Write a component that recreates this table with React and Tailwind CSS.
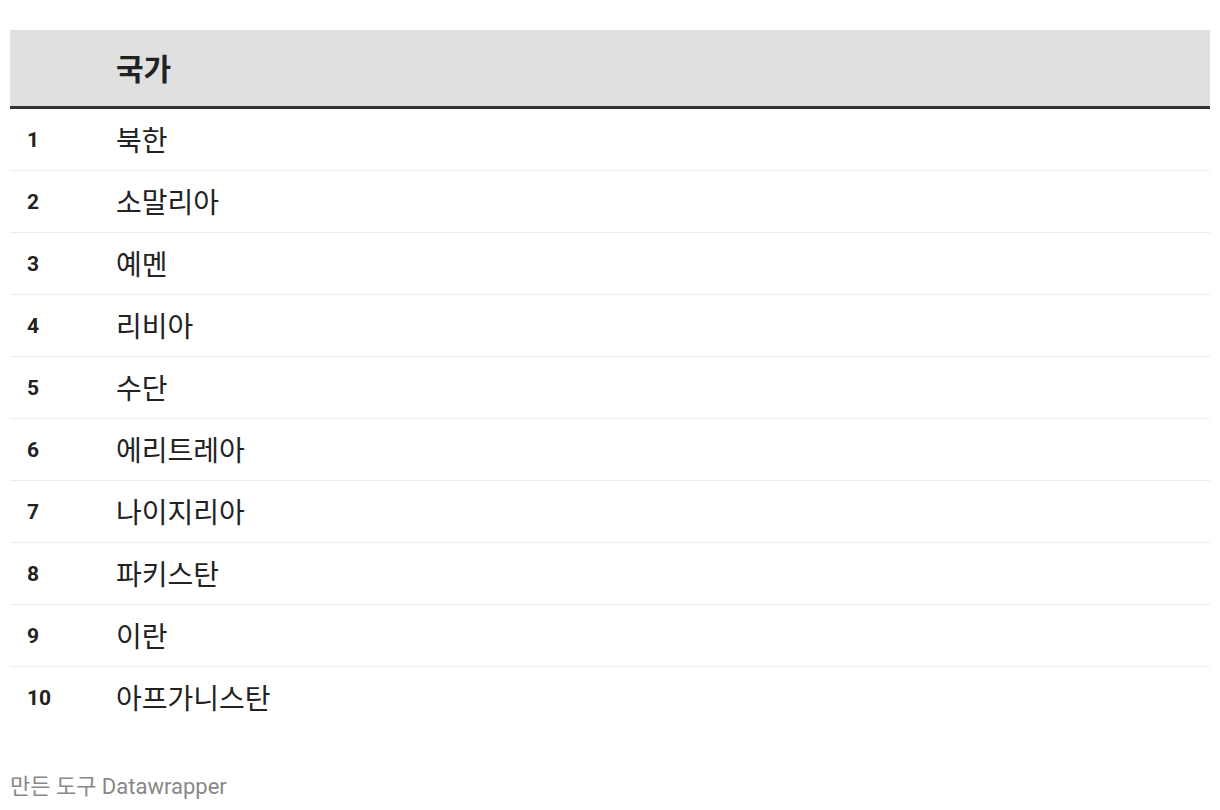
const rows = [
  "북한",
  "소말리아",
  "예멘",
  "리비아",
  "수단",
  "에리트레아",
  "나이지리아",
  "파키스탄",
  "이란",
  "아프가니스탄",
];

export default function App() {
  return (
    <div
      className="min-h-[810px] w-[1220px] bg-white px-[10px] pt-[30px]"
      style={{ fontFamily: 'Roboto, "Noto Sans CJK KR", sans-serif' }}
    >
      {/* header */}
      <div className="flex h-[76px] items-center border-b-[3px] border-[#333333] bg-[#e0e0e0] box-content">
        <div className="w-[106px]" />
        <div className="pt-[2px] text-[30px] font-bold text-[#222222]">국가</div>
      </div>

      {/* body */}
      <div>
        {rows.map((name, i) => (
          <div
            key={i}
            className={`flex h-[62px] items-center ${
              i < rows.length - 1 ? "border-b border-[#ececec]" : ""
            }`}
          >
            <div className="w-[106px] pl-[17px] pt-[2px] text-[21px] font-bold text-[#222222]">
              {i + 1}
            </div>
            <div className="pt-[4px] text-[28px] text-[#222222]">{name}</div>
          </div>
        ))}
      </div>

      <div className="mt-[41px] text-[22px] text-[#888888]">
        만든 도구 Datawrapper
      </div>
    </div>
  );
}
